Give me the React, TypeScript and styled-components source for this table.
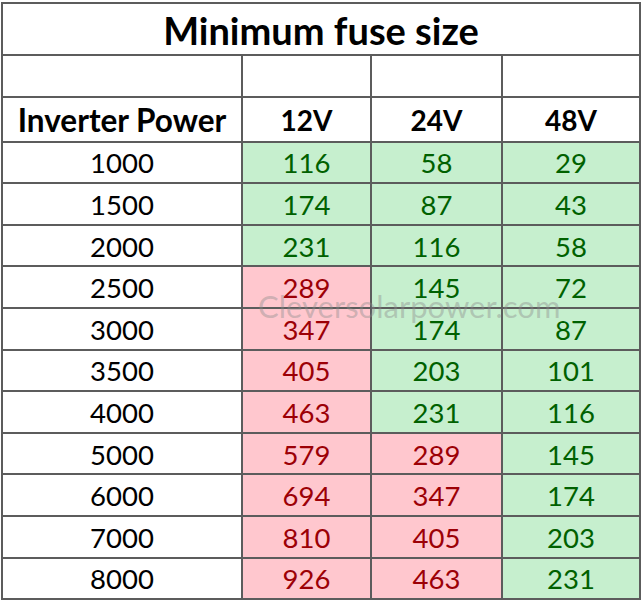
import React from "react";
import styled, { createGlobalStyle } from "styled-components";

const Global = createGlobalStyle`
  html, body { margin: 0; padding: 0; background: #fff; }
  body { font-family: Lato, "Open Sans", sans-serif; }
`;

const Page = styled.div`
  padding: 2px 0 0 1px;
  width: 644px;
  height: 604px;
  box-sizing: border-box;
`;

const Grid = styled.div`
  position: relative;
  display: grid;
  width: 640px;
  grid-template-columns: 238px 127px 129px 136px;
  grid-template-rows: 50px 40px 42.7px repeat(11, 39.6px);
  gap: 2px;
  padding: 2px;
  box-sizing: border-box;
  background: #5c5c5c;
`;

const Title = styled.div`
  grid-column: 1 / -1;
  background: #fff;
  display: flex;
  align-items: center;
  justify-content: center;
  font-weight: 700;
  font-size: 38px;
  color: #000;
  padding-top: 2px;
`;

const Blank = styled.div`
  background: #fff;
`;

const Head = styled.div<{ $size?: number }>`
  background: #fff;
  display: flex;
  align-items: center;
  justify-content: center;
  font-weight: 700;
  font-size: ${(p) => p.$size ?? 28}px;
  color: #000;
  padding-top: 2px;
`;

type Tone = "plain" | "good" | "bad";

const Cell = styled.div<{ $tone: Tone }>`
  background: ${(p) =>
    p.$tone === "good" ? "#c6efce" : p.$tone === "bad" ? "#ffc7ce" : "#fff"};
  color: ${(p) =>
    p.$tone === "good" ? "#006100" : p.$tone === "bad" ? "#9c0006" : "#000"};
  display: flex;
  align-items: center;
  justify-content: center;
  font-size: 27.5px;
  padding-top: 1px;
`;

const Watermark = styled.div`
  position: absolute;
  left: 257px;
  top: 285px;
  font-size: 31px;
  color: rgba(140, 140, 140, 0.42);
  pointer-events: none;
  white-space: nowrap;
`;

const rows: [number, number, number, number][] = [
  [1000, 116, 58, 29],
  [1500, 174, 87, 43],
  [2000, 231, 116, 58],
  [2500, 289, 145, 72],
  [3000, 347, 174, 87],
  [3500, 405, 203, 101],
  [4000, 463, 231, 116],
  [5000, 579, 289, 145],
  [6000, 694, 347, 174],
  [7000, 810, 405, 203],
  [8000, 926, 463, 231],
];

const tone = (amps: number): Tone => (amps > 250 ? "bad" : "good");

export default function App() {
  return (
    <Page>
      <Global />
      <Grid>
        <Title>Minimum fuse size</Title>
        <Blank />
        <Blank />
        <Blank />
        <Blank />
        <Head $size={31.5}>Inverter Power</Head>
        <Head>12V</Head>
        <Head>24V</Head>
        <Head>48V</Head>
        {rows.map(([p, a, b, c]) => (
          <React.Fragment key={p}>
            <Cell $tone="plain">{p}</Cell>
            <Cell $tone={tone(a)}>{a}</Cell>
            <Cell $tone={tone(b)}>{b}</Cell>
            <Cell $tone={tone(c)}>{c}</Cell>
          </React.Fragment>
        ))}
        <Watermark>Cleversolarpower.com</Watermark>
      </Grid>
    </Page>
  );
}
